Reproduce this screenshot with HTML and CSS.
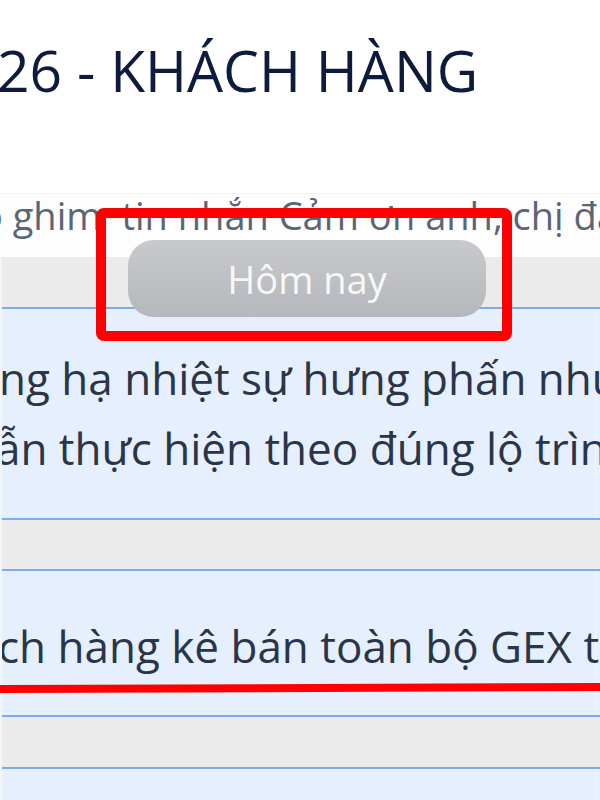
FILE: index.html
```html
<!DOCTYPE html>
<html lang="vi">
<head>
<meta charset="utf-8">
<title>KHÁCH HÀNG</title>
<link rel="stylesheet" href="styles.css">
</head>
<body>
<div class="screen">
  <header class="title-bar">
    <h1 class="title">26 - KHÁCH HÀNG</h1>
  </header>
  <div class="pinned">
    <span class="pin-a">o ghim</span><span class="pin-b">tin nhắn Cảm ơn anh, chị đã</span>
  </div>
  <main class="chat">
    <div class="bubble b1">
      <p class="line l1">ng hạ nhiệt sự hưng phấn như</p>
      <p class="line l2">ẫn thực hiện theo đúng lộ trình</p>
    </div>
    <div class="bubble b2">
      <p class="line l3">ch hàng kê bán toàn bộ GEX trong</p>
    </div>
    <div class="bubble b3"></div>
  </main>
  <div class="date-pill">Hôm nay</div>
  <div class="mark-box"></div>
  <div class="mark-line"></div>
</div>
</body>
</html>
```

FILE: styles.css
```css
html, body {
  margin: 0;
  padding: 0;
  background: #ffffff;
}

.screen {
  position: relative;
  width: 600px;
  height: 800px;
  overflow: hidden;
  background: #ffffff;
  font-family: "Open Sans", "Noto Sans", "Liberation Sans", sans-serif;
}

.title-bar {
  height: 193px;
  box-sizing: border-box;
  padding-top: 30px;
  overflow: hidden;
}

.title {
  margin: 0 0 0 -3px;
  font-size: 57px;
  line-height: 80px;
  font-weight: 400;
  color: #0d1c3d;
  white-space: nowrap;
}

.pinned {
  height: 64px;
  box-sizing: border-box;
  border-top: 1px solid #f1f2f4;
  background: #fdfdfe;
  font-size: 38px;
  line-height: 40px;
  padding-top: 1px;
  color: #5c6573;
  white-space: nowrap;
  overflow: hidden;
  display: flex;
}

.pin-a {
  margin-left: -20px;
}

.pin-b {
  margin-left: 20px;
}

.chat {
  height: 543px;
  box-sizing: border-box;
  padding-top: 50px;
  background: #ebebeb;
  border-left: 2px solid #f3f5f9;
}

.bubble {
  background: linear-gradient(to right, #e5effd 593px, #f3f7fd 593px, #f3f7fd 594px, #e5effd 594px);
  border-top: 2px solid #7eabeb;
  border-bottom: 2px solid #7eabeb;
  overflow: hidden;
}

.b1 {
  padding: 34px 0 35px;
  margin-bottom: 49px;
}

.b2 {
  padding: 40px 0 34px;
  margin-bottom: 50px;
}

.b3 {
  height: 40px;
  border-bottom: 0;
}

.line {
  margin: 0;
  font-size: 44px;
  line-height: 70px;
  color: #2a3547;
  white-space: nowrap;
}

.l1 {
  margin-left: -3px;
}

.l2 {
  margin-left: -6px;
}

.l3 {
  margin-left: -4px;
}

.date-pill {
  position: absolute;
  left: 128px;
  top: 240px;
  width: 358px;
  height: 77px;
  border-radius: 26px;
  background: linear-gradient(#c8c9cb, #b4b7bc);
  color: #f7f7f8;
  font-size: 38px;
  display: flex;
  align-items: center;
  justify-content: center;
}

.mark-box {
  position: absolute;
  left: 96px;
  top: 208px;
  width: 416px;
  height: 133px;
  box-sizing: border-box;
  border: 10px solid #ff0000;
  border-radius: 8px;
}

.mark-line {
  position: absolute;
  left: 0;
  top: 684px;
  width: 600px;
  height: 8px;
  background: #ff0000;
  transform: rotate(-0.2deg);
}
```
